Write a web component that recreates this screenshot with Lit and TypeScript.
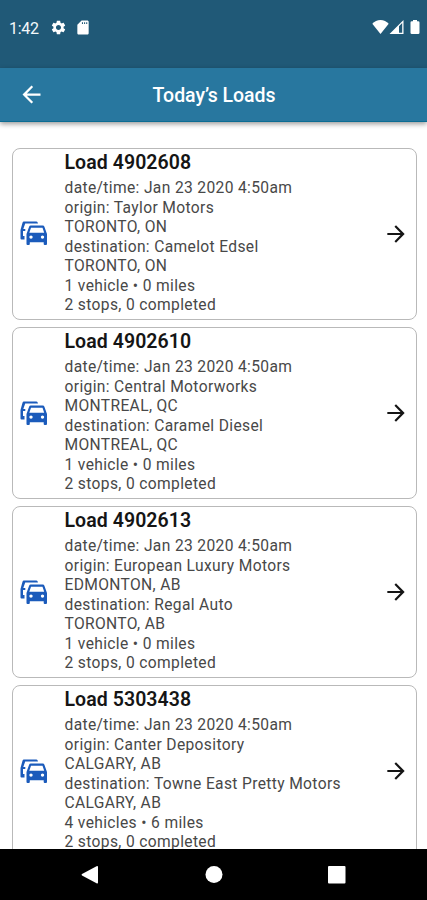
import { LitElement, html, css } from "lit";
import { customElement, property } from "lit/decorators.js";

interface Load {
  id: string;
  origin: string;
  originCity: string;
  destination: string;
  destinationCity: string;
  summary: string;
}

const loads: Load[] = [
  { id: "4902608", origin: "Taylor Motors", originCity: "TORONTO, ON", destination: "Camelot Edsel", destinationCity: "TORONTO, ON", summary: "1 vehicle • 0 miles" },
  { id: "4902610", origin: "Central Motorworks", originCity: "MONTREAL, QC", destination: "Caramel Diesel", destinationCity: "MONTREAL, QC", summary: "1 vehicle • 0 miles" },
  { id: "4902613", origin: "European Luxury Motors", originCity: "EDMONTON, AB", destination: "Regal Auto", destinationCity: "TORONTO, AB", summary: "1 vehicle • 0 miles" },
  { id: "5303438", origin: "Canter Depository", originCity: "CALGARY, AB", destination: "Towne East Pretty Motors", destinationCity: "CALGARY, AB", summary: "4 vehicles • 6 miles" },
];

@customElement("load-card")
export class LoadCard extends LitElement {
  @property({ attribute: false }) load!: Load;

  static styles = css`
    :host { display: block; }
    .card {
      box-sizing: border-box;
      height: 171.5px;
      border: 1.3px solid #b9b9b9;
      border-radius: 8px;
      display: flex;
      align-items: center;
      padding: 0 7px 0 6px;
      background: #fff;
    }
    .cars { width: 31px; height: 31px; fill: #1b5bbb; flex: none; }
    .details {
      flex: 1;
      align-self: flex-start;
      margin-left: 15px;
      font-size: 15.6px;
      line-height: 19.53px;
      letter-spacing: 0.35px;
      color: #484848;
      white-space: nowrap;
    }
    .title {
      margin: 3px 0 4.8px;
      font-size: 19.5px;
      line-height: 22px;
      font-weight: 600;
      letter-spacing: 0.07px;
      color: #151515;
    }
    .arrow { width: 26px; height: 26px; fill: #151515; flex: none; }
  `;

  render() {
    const l = this.load;
    return html`
      <div class="card">
        <svg class="cars" viewBox="0 0 31 31">
          <path d="M4.800 3.500H17.500Q18.600 3.500 19 5.500H6.200L4.300 11H6.300V13H4V18H5.500V21.500H2.500Q1.500 21.500 1.500 20.500V12L3.500 4.800Q3.900 3.500 4.800 3.500z"/>
          <path fill-rule="evenodd" d="M11.700 7.500H23.800Q25 7.500 25.400 8.700L28 16V26Q28 27 27 27H25.700Q24.700 27 24.700 26V24.200H10.800V26Q10.800 27 9.800 27H8.500Q7.500 27 7.500 26V16L10.100 8.700Q10.500 7.500 11.700 7.500zM12 9.700L10.300 14.700H25.200L23.500 9.700zM12 17.400a1.700 1.700 0 1 0 0 3.400a1.700 1.700 0 1 0 0-3.400zM23.500 17.400a1.700 1.700 0 1 0 0 3.400a1.700 1.700 0 1 0 0-3.400z"/>
        </svg>
        <div class="details">
          <div class="title">Load ${l.id}</div>
          <div>date/time: Jan 23 2020 4:50am</div>
          <div>origin: ${l.origin}</div>
          <div>${l.originCity}</div>
          <div>destination: ${l.destination}</div>
          <div>${l.destinationCity}</div>
          <div>${l.summary}</div>
          <div>2 stops, 0 completed</div>
        </div>
        <svg class="arrow" viewBox="0 0 24 24"><path d="M12 4l-1.41 1.41L16.17 11H4v2h12.17l-5.58 5.59L12 20l8-8z"/></svg>
      </div>
    `;
  }
}

@customElement("app-root")
export class AppRoot extends LitElement {
  static styles = css`
    :host {
      display: flex;
      flex-direction: column;
      height: 900px;
      overflow: hidden;
      background: #fff;
      font-family: Roboto, "Liberation Sans", sans-serif;
    }
    .status {
      box-sizing: border-box;
      height: 67.5px;
      flex: none;
      background: #205977;
      color: #f4f8fa;
      display: flex;
      align-items: flex-start;
      padding: 18px 6px 0 9px;
    }
    .status svg { fill: #fff; flex: none; }
    .time { font-size: 16px; line-height: 21px; width: 40.5px; letter-spacing: -0.25px; }
    .gear { width: 17px; height: 17px; margin: 0.5px 7.5px 0 0; }
    .sd { width: 18px; height: 17px; margin-top: 0.5px; }
    .right { margin-left: auto; display: flex; padding-top: 1px; }
    .wifi { width: 17px; height: 16px; }
    .signal { width: 15px; height: 16px; }
    .battery { width: 10px; height: 16px; margin: 0 1px 0 6px; }
    .bar {
      box-sizing: border-box;
      height: 54.5px;
      flex: none;
      background: #28779f;
      border-bottom: 1.5px solid #0b6c93;
      box-shadow: 0 2px 5px rgba(0, 0, 0, 0.4);
      display: grid;
      grid-template-columns: 62px 1fr 62px;
      align-items: center;
      color: #fff;
      z-index: 1;
    }
    .back { width: 27px; height: 27px; fill: #fff; margin: 1px 0 0 17.5px; }
    .heading { text-align: center; font-size: 19.5px; line-height: 24px; font-weight: 500; letter-spacing: -0.05px; padding: 4px 0 0 1px; }
    .list {
      flex: 1;
      min-height: 0;
      overflow: hidden;
      padding: 26.2px 10.5px 0 11.5px;
      display: flex;
      flex-direction: column;
      gap: 7.6px;
    }
    load-card { flex: none; }
    .nav { height: 51px; flex: none; background: #000; }
    .nav svg { display: block; width: 427px; height: 51px; fill: #fff; }
  `;

  render() {
    return html`
      <div class="status">
        <div class="time">1:42</div>
        <svg class="gear" viewBox="0 0 24 24"><path d="M19.14 12.94c.04-.3.06-.61.06-.94 0-.32-.02-.64-.07-.94l2.03-1.58c.18-.14.23-.41.12-.61l-1.92-3.32c-.12-.22-.37-.29-.59-.22l-2.39.96c-.5-.38-1.03-.7-1.62-.94l-.36-2.54c-.04-.24-.24-.41-.48-.41h-3.84c-.24 0-.43.17-.47.41l-.36 2.54c-.59.24-1.13.57-1.62.94l-2.39-.96c-.22-.08-.47 0-.59.22L2.74 8.87c-.12.21-.08.47.12.61l2.03 1.58c-.05.3-.09.63-.09.94s.02.64.07.94l-2.03 1.58c-.18.14-.23.41-.12.61l1.92 3.32c.12.22.37.29.59.22l2.39-.96c.5.38 1.03.7 1.62.94l.36 2.54c.05.24.24.41.48.41h3.84c.24 0 .44-.17.47-.41l.36-2.54c.59-.24 1.13-.56 1.62-.94l2.39.96c.22.08.47 0 .59-.22l1.92-3.32c.12-.22.07-.47-.12-.61l-2.01-1.58zM12 15.6c-1.98 0-3.6-1.62-3.6-3.6s1.62-3.6 3.6-3.6 3.6 1.62 3.6 3.6-1.62 3.6-3.6 3.6z"/></svg>
        <svg class="sd" viewBox="0 0 24 24"><path d="M18 2h-8L4.020 8 4 20c0 1.100.9 2 2 2h12c1.100 0 2-.9 2-2V4c0-1.100-.9-2-2-2zm-6 5h-1.500V4.500h1.500v2.500zm3 0h-1.500V4.500h1.500v2.500zm3 0h-1.500V4.500h1.500v2.500z"/></svg>
        <div class="right">
          <svg class="wifi" viewBox="0 0 17 16"><path d="M0.300 4.800C2.400 2.400 5.300 1 8.500 1s6.100 1.400 8.200 3.800L8.500 15z"/></svg>
          <svg class="signal" viewBox="0 0 15 16"><path fill-rule="evenodd" d="M0.500 15L14.500 1V15zM10 7.300V13.700H13.200V4.100z"/></svg>
          <svg class="battery" viewBox="0 0 10 16"><path d="M3 1h4v1.200h1.200q1.300 0 1.300 1.300V13.700q0 1.300-1.300 1.300H1.800Q.5 15 .5 13.700V3.500q0-1.300 1.300-1.300H3z"/></svg>
        </div>
      </div>
      <div class="bar">
        <svg class="back" viewBox="0 0 24 24"><path d="M20 11H7.830l5.590-5.590L12 4l-8 8 8 8 1.410-1.410L7.830 13H20v-2z"/></svg>
        <div class="heading">Today’s Loads</div>
      </div>
      <div class="list">${loads.map((l) => html`<load-card .load=${l}></load-card>`)}</div>
      <div class="nav">
        <svg viewBox="0 0 427 51">
          <path d="M96.500 17.200Q98 16.500 98 18V33.500Q98 35 96.500 34.300L82 26.500Q81 25.700 82 25z"/>
          <circle cx="214" cy="25.500" r="8.500"/>
          <rect x="328" y="17" width="17.500" height="17.500" rx="1"/>
        </svg>
      </div>
    `;
  }
}
